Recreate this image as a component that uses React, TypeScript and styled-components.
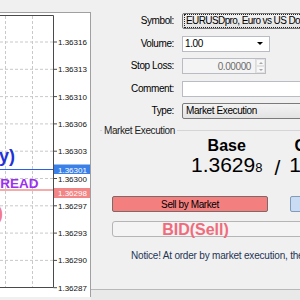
import React from "react";
import styled, { createGlobalStyle } from "styled-components";

const UI_FONT = `"Liberation Sans", Arial, sans-serif`;
const CHART_FONT = `"Liberation Sans", Arial, sans-serif`;

const GlobalStyle = createGlobalStyle`
  html, body {
    margin: 0;
    padding: 0;
    width: 300px;
    height: 300px;
    overflow: hidden;
    background: #f0f0f0;
  }
`;

const levels = [
  "1.36316",
  "1.36313",
  "1.36310",
  "1.36306",
  "1.36303",
  "1.36300",
  "1.36297",
  "1.36293",
  "1.36290",
  "1.36287",
].map((price, i) => ({ price, y: 42 + i * 27.3 }));

const PriceChart = () => (
  <svg width="90" height="284" viewBox="0 13 90 284">
    <rect x="0" y="13" width="90" height="284" fill="#fff" />
    {[5.5, 32.5].map((x) => (
      <line key={x} x1={x} y1="16" x2={x} y2="287" stroke="#c9c9c9" strokeDasharray="3 2" />
    ))}
    {levels.slice(0, -1).map((l) => (
      <line key={l.price} x1="0" y1={l.y} x2="53" y2={l.y} stroke="#c9c9c9" strokeDasharray="3 2" />
    ))}
    <polyline points="0,15.5 53.5,15.5 53.5,287.5 0,287.5" fill="none" stroke="#4a4a4a" />
    {levels.map((l) => (
      <g key={l.price}>
        <line x1="53.5" y1={l.y} x2="57" y2={l.y} stroke="#4a4a4a" />
        <text x="58" y={l.y + 3} fontSize="8" fontFamily={CHART_FONT} fill="#111">
          {l.price}
        </text>
      </g>
    ))}
    <line x1="0" y1="169.5" x2="53" y2="169.5" stroke="#2c5ee8" />
    <line x1="0" y1="190" x2="53" y2="190" stroke="#f6abab" strokeWidth="2" />
    <rect x="54" y="164.5" width="36" height="9.5" fill="#3a80e6" />
    <text x="58" y="172.5" fontSize="8" fontFamily={CHART_FONT} fill="#fff">1.36301</text>
    <rect x="54" y="188" width="36" height="10" fill="#f28585" />
    <text x="58" y="196" fontSize="8" fontFamily={CHART_FONT} fill="#fff">1.36298</text>
    <text x="15" y="162" textAnchor="end" fontSize="18" fontWeight="bold" fontFamily={CHART_FONT} fill="#1f33d8">
      ASK(Buy)
    </text>
    <text x="38.5" y="188" textAnchor="end" fontSize="13.5" fontWeight="bold" fontFamily={CHART_FONT} fill="#9b30ef">
      SPREAD
    </text>
    <text x="3" y="219" textAnchor="end" fontSize="18" fontWeight="bold" fontFamily={CHART_FONT} fill="#f27b8a">
      BID(Sell)
    </text>
  </svg>
);

const App = () => (
  <>
    <GlobalStyle />
    <Window>
      <ChartPanel>
        <PriceChart />
      </ChartPanel>
      <OrderPanel>
        <Form>
          <Label>Symbol:</Label>
          <Field $variant="combo" $width={140}>
            <Focus>EURUSDpro, Euro vs US Dollar</Focus>
          </Field>
          <Label>Volume:</Label>
          <Field $variant="edit" $width={88}>
            <span>1.00</span>
            <DropArrow />
          </Field>
          <Label>Stop Loss:</Label>
          <Field $variant="disabled" $width={84}>
            <DisabledValue>0.00000</DisabledValue>
            <Spinner>
              <SpinHalf><SpinArrow $up /></SpinHalf>
              <SpinHalf><SpinArrow /></SpinHalf>
            </Spinner>
          </Field>
          <Label>Comment:</Label>
          <Field $variant="edit" $width={140} />
          <Label>Type:</Label>
          <Field $variant="combo" $width={140}>
            <ComboText>Market Execution</ComboText>
          </Field>
        </Form>
        <Group>
          <Legend>Market Execution</Legend>
          <Quotes>
            <QuoteColumn>
              <QuoteHead>Base</QuoteHead>
              <Price>
                1.3629<Pip>8</Pip>
              </Price>
            </QuoteColumn>
            <Slash>/</Slash>
            <QuoteColumn>
              <QuoteHead>Counter</QuoteHead>
              <Price>
                1.3630<Pip>1</Pip>
              </Price>
            </QuoteColumn>
          </Quotes>
          <Buttons>
            <TradeButton $side="sell">Sell by Market</TradeButton>
            <TradeButton $side="buy">Buy by Market</TradeButton>
          </Buttons>
          <SideBox>
            <SideText $side="sell">BID(Sell)</SideText>
            <SideText $side="buy">ASK(Buy)</SideText>
          </SideBox>
          <Notice>
            Notice! At order by market execution, the price may differ from the quoted one.
          </Notice>
        </Group>
        <Footer />
      </OrderPanel>
    </Window>
  </>
);

export default App;

const Window = styled.div`
  display: flex;
  width: 480px;
  height: 300px;
  background: #f0f0f0;
  font-family: ${UI_FONT};
  font-size: 10px;
  letter-spacing: -0.4px;
  color: #000;
`;

const ChartPanel = styled.div`
  flex: none;
  width: 90px;
  height: 284px;
  margin-top: 12px;
  border-top: 1px solid #a0a0a0;
  border-right: 1px solid #a0a0a0;
  background: #fff;

  svg {
    display: block;
    letter-spacing: 0;
  }
`;

const OrderPanel = styled.div`
  flex: 1;
  display: flex;
  flex-direction: column;
  padding-top: 13px;
`;

const Form = styled.div`
  display: grid;
  grid-template-columns: 83px 1fr;
  grid-auto-rows: 16px;
  column-gap: 8px;
  row-gap: 6.5px;
`;

const Label = styled.div`
  text-align: right;
  line-height: 16px;
  white-space: nowrap;
`;

const Field = styled.div<{ $variant: "combo" | "edit" | "disabled"; $width: number }>`
  box-sizing: border-box;
  width: ${(p) => p.$width}px;
  height: 16px;
  display: flex;
  align-items: center;
  justify-content: space-between;
  padding: ${(p) => (p.$variant === "combo" ? "1px" : "0 0 0 2px")};
  border: 1px solid ${(p) => (p.$variant === "combo" ? "#7a7a7a" : "#b9bcc2")};
  border-radius: ${(p) => (p.$variant === "combo" ? "2px" : "0")};
  background: ${(p) =>
    p.$variant === "combo"
      ? "linear-gradient(#f3f3f3, #e3e3e3)"
      : p.$variant === "disabled"
      ? "#f4f4f4"
      : "#fff"};
  white-space: nowrap;
  overflow: hidden;
`;

const Focus = styled.div`
  flex: 1;
  height: 12px;
  line-height: 12px;
  padding-left: 1px;
  border: 1px dotted #222;
  overflow: hidden;
  letter-spacing: -0.6px;
`;

const ComboText = styled.div`
  flex: 1;
  padding-left: 2px;
  line-height: 14px;
`;

const DropArrow = styled.span`
  width: 0;
  height: 0;
  margin-right: 6px;
  border-left: 3px solid transparent;
  border-right: 3px solid transparent;
  border-top: 3px solid #000;
`;

const DisabledValue = styled.span`
  flex: 1;
  text-align: right;
  padding-right: 4px;
  color: #6d6d6d;
`;

const Spinner = styled.div`
  display: flex;
  flex-direction: column;
  width: 9px;
  height: 14px;
  border-left: 1px solid #dcdcdc;
`;

const SpinHalf = styled.div`
  flex: 1;
  display: flex;
  align-items: center;
  justify-content: center;
  background: #f7f7f7;
  border: 1px solid #e2e2e2;
`;

const SpinArrow = styled.span<{ $up?: boolean }>`
  width: 0;
  height: 0;
  border-left: 2px solid transparent;
  border-right: 2px solid transparent;
  ${(p) => (p.$up ? "border-bottom: 2px solid #a8a8a8;" : "border-top: 2px solid #a8a8a8;")}
`;

const Group = styled.fieldset`
  margin: 5px 0 0 9px;
  padding: 0;
  border: none;
  border-top: 1px solid #d5d5d5;
  min-width: 0;
`;

const Legend = styled.legend`
  margin-left: 2px;
  padding: 0 2px;
  line-height: 13px;
  color: #222;
`;

const Quotes = styled.div`
  display: flex;
  align-items: flex-end;
  padding-left: 91px;
  margin-top: 1px;
  letter-spacing: 0;
`;

const QuoteColumn = styled.div`
  display: flex;
  flex-direction: column;
  align-items: center;
`;

const QuoteHead = styled.div`
  font-size: 16px;
  font-weight: bold;
  line-height: 16px;
`;

const Price = styled.div`
  font-size: 21px;
  line-height: 21px;
  white-space: nowrap;
`;

const Pip = styled.span`
  font-size: 13px;
`;

const Slash = styled.div`
  font-size: 21px;
  line-height: 21px;
  margin: 0 9px 0 12px;
`;

const Buttons = styled.div`
  display: flex;
  gap: 22px;
  margin: 18px 0 0 12px;
`;

const TradeButton = styled.button<{ $side: "sell" | "buy" }>`
  flex: none;
  width: 156px;
  height: 16px;
  padding: 0;
  font: inherit;
  letter-spacing: inherit;
  color: #000;
  border: 1px solid ${(p) => (p.$side === "sell" ? "#7c6a6a" : "#7f9db9")};
  border-radius: 2px;
  background: ${(p) => (p.$side === "sell" ? "#f47f7f" : "#c9dcf3")};
`;

const SideBox = styled.div`
  display: flex;
  box-sizing: border-box;
  width: 400px;
  height: 16px;
  margin: 9px 0 0 12px;
  border: 1px solid #b5b5b5;
  border-radius: 3px;
  background: #f4f4f4;
`;

const SideText = styled.div<{ $side: "sell" | "buy" }>`
  width: 165px;
  text-align: center;
  font-size: 16px;
  font-weight: bold;
  letter-spacing: 0;
  line-height: 15px;
  color: ${(p) => (p.$side === "sell" ? "#f06b7b" : "#3250d8")};
`;

const Notice = styled.div`
  margin: 12px 0 0 31px;
  line-height: 13px;
  white-space: nowrap;
  letter-spacing: -0.2px;
  color: #1d3557;
`;

const Footer = styled.div`
  margin-top: auto;
  height: 10px;
  border-top: 1px solid #b8b8b8;
  background: #e9e9e9;
`;
